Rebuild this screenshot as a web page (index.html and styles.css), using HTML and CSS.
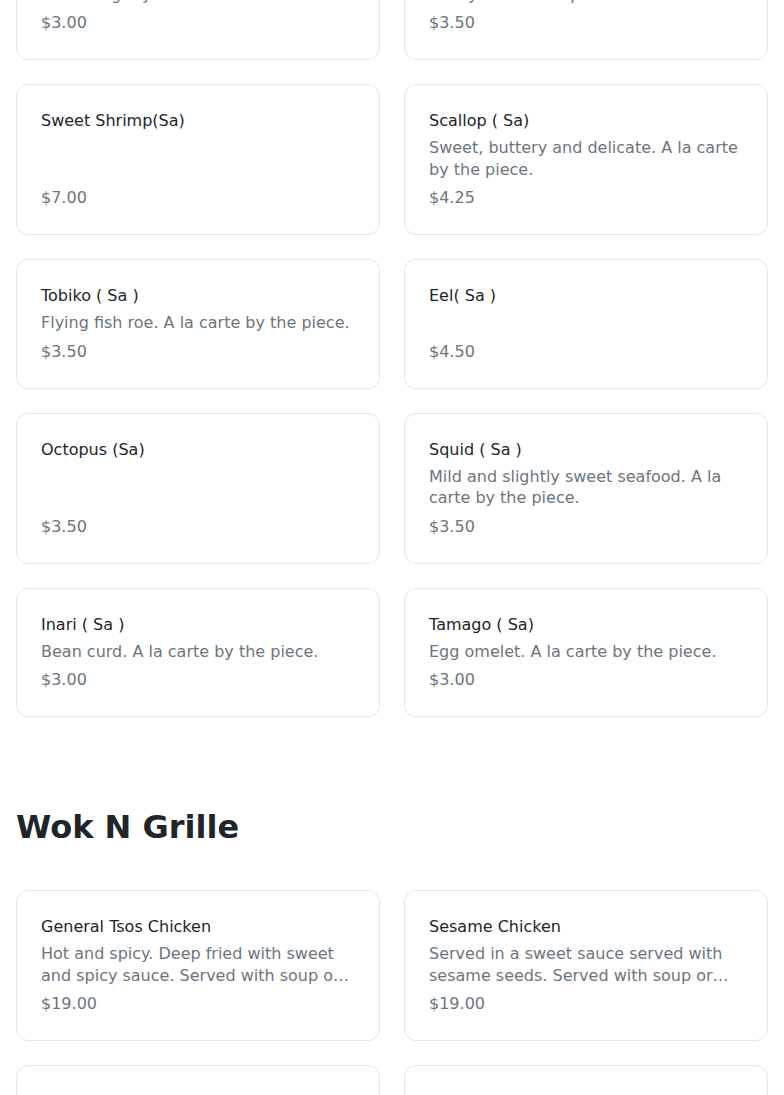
FILE: index.html
```html
<!DOCTYPE html>
<html lang="en">
<head>
  <meta charset="UTF-8">
  <meta name="viewport" content="width=device-width, initial-scale=1.0">
  <title>Menu</title>
  <link rel="stylesheet" href="styles.css">
</head>
<body>
  <div class="menu">
    <section class="menu-section sushi">
      <div class="item-grid">
        <div class="item-card">
          <div class="item-name">Salmon ( Sa )</div>
          <div class="item-desc">Fresh Atlantic salmon, rich and buttery. Served lightly seared with a touch of sauce.</div>
          <div class="item-price">$3.00</div>
        </div>
        <div class="item-card">
          <div class="item-name">Tuna ( Sa )</div>
          <div class="item-desc">Lean red tuna. A la carte by the piece, mildly sweet and pure.</div>
          <div class="item-price">$3.50</div>
        </div>

        <div class="item-card">
          <div class="item-name">Sweet Shrimp(Sa)</div>
          <div class="item-price">$7.00</div>
        </div>
        <div class="item-card">
          <div class="item-name">Scallop ( Sa)</div>
          <div class="item-desc">Sweet, buttery and delicate. A la carte by the piece.</div>
          <div class="item-price">$4.25</div>
        </div>

        <div class="item-card">
          <div class="item-name">Tobiko ( Sa )</div>
          <div class="item-desc">Flying fish roe. A la carte by the piece.</div>
          <div class="item-price">$3.50</div>
        </div>
        <div class="item-card">
          <div class="item-name">Eel( Sa )</div>
          <div class="item-price">$4.50</div>
        </div>

        <div class="item-card">
          <div class="item-name">Octopus (Sa)</div>
          <div class="item-price">$3.50</div>
        </div>
        <div class="item-card">
          <div class="item-name">Squid ( Sa )</div>
          <div class="item-desc">Mild and slightly sweet seafood. A la carte by the piece.</div>
          <div class="item-price">$3.50</div>
        </div>

        <div class="item-card">
          <div class="item-name">Inari ( Sa )</div>
          <div class="item-desc">Bean curd. A la carte by the piece.</div>
          <div class="item-price">$3.00</div>
        </div>
        <div class="item-card">
          <div class="item-name">Tamago ( Sa)</div>
          <div class="item-desc">Egg omelet. A la carte by the piece.</div>
          <div class="item-price">$3.00</div>
        </div>
      </div>
    </section>

    <section class="menu-section">
      <h2 class="section-title">Wok N Grille</h2>
      <div class="item-grid">
        <div class="item-card">
          <div class="item-name">General Tsos Chicken</div>
          <div class="item-desc">Hot and spicy. Deep fried with sweet and spicy sauce. Served with soup or salad and white rice.</div>
          <div class="item-price">$19.00</div>
        </div>
        <div class="item-card">
          <div class="item-name">Sesame Chicken</div>
          <div class="item-desc">Served in a sweet sauce served with sesame seeds. Served with soup or salad and white rice.</div>
          <div class="item-price">$19.00</div>
        </div>

        <div class="item-card">
          <div class="item-name">Orange Chicken</div>
          <div class="item-desc">Crispy chicken in a tangy orange sauce. Served with soup or salad.</div>
          <div class="item-price">$19.00</div>
        </div>
        <div class="item-card">
          <div class="item-name">Mongolian Beef</div>
          <div class="item-desc">Sliced beef with scallions and onions. Served with soup or salad.</div>
          <div class="item-price">$21.00</div>
        </div>
      </div>
    </section>
  </div>
</body>
</html>
```

FILE: styles.css
```css
body {
  margin: 0;
  background: #fff;
  font-family: "DejaVu Sans", Verdana, sans-serif;
  color: #212529;
}

.menu {
  padding: 0 16px;
}

/* page is viewed scrolled down: first row sits partly above the fold */
.sushi {
  margin-top: -91px;
}

.menu-section {
  padding-bottom: 91px;
}

.section-title {
  margin: 0 0 44px;
  font-size: 32px;
  line-height: 38px;
  font-weight: bold;
  color: #212529;
}

.item-grid {
  display: grid;
  grid-template-columns: 1fr 1fr;
  gap: 24px;
}

.item-card {
  display: flex;
  flex-direction: column;
  padding: 24px;
  border: 1px solid #e6e6e6;
  border-radius: 12px;
  background: #fff;
}

.item-name {
  font-size: 16px;
  line-height: 24px;
  color: #212529;
}

.item-desc {
  margin-top: 4px;
  font-size: 16px;
  line-height: 21.5px;
  color: #6c757d;
  display: -webkit-box;
  -webkit-line-clamp: 2;
  -webkit-box-orient: vertical;
  overflow: hidden;
}

.item-price {
  margin-top: auto;
  padding-top: 6px;
  font-size: 16px;
  line-height: 24px;
  color: #6c757d;
}
```
